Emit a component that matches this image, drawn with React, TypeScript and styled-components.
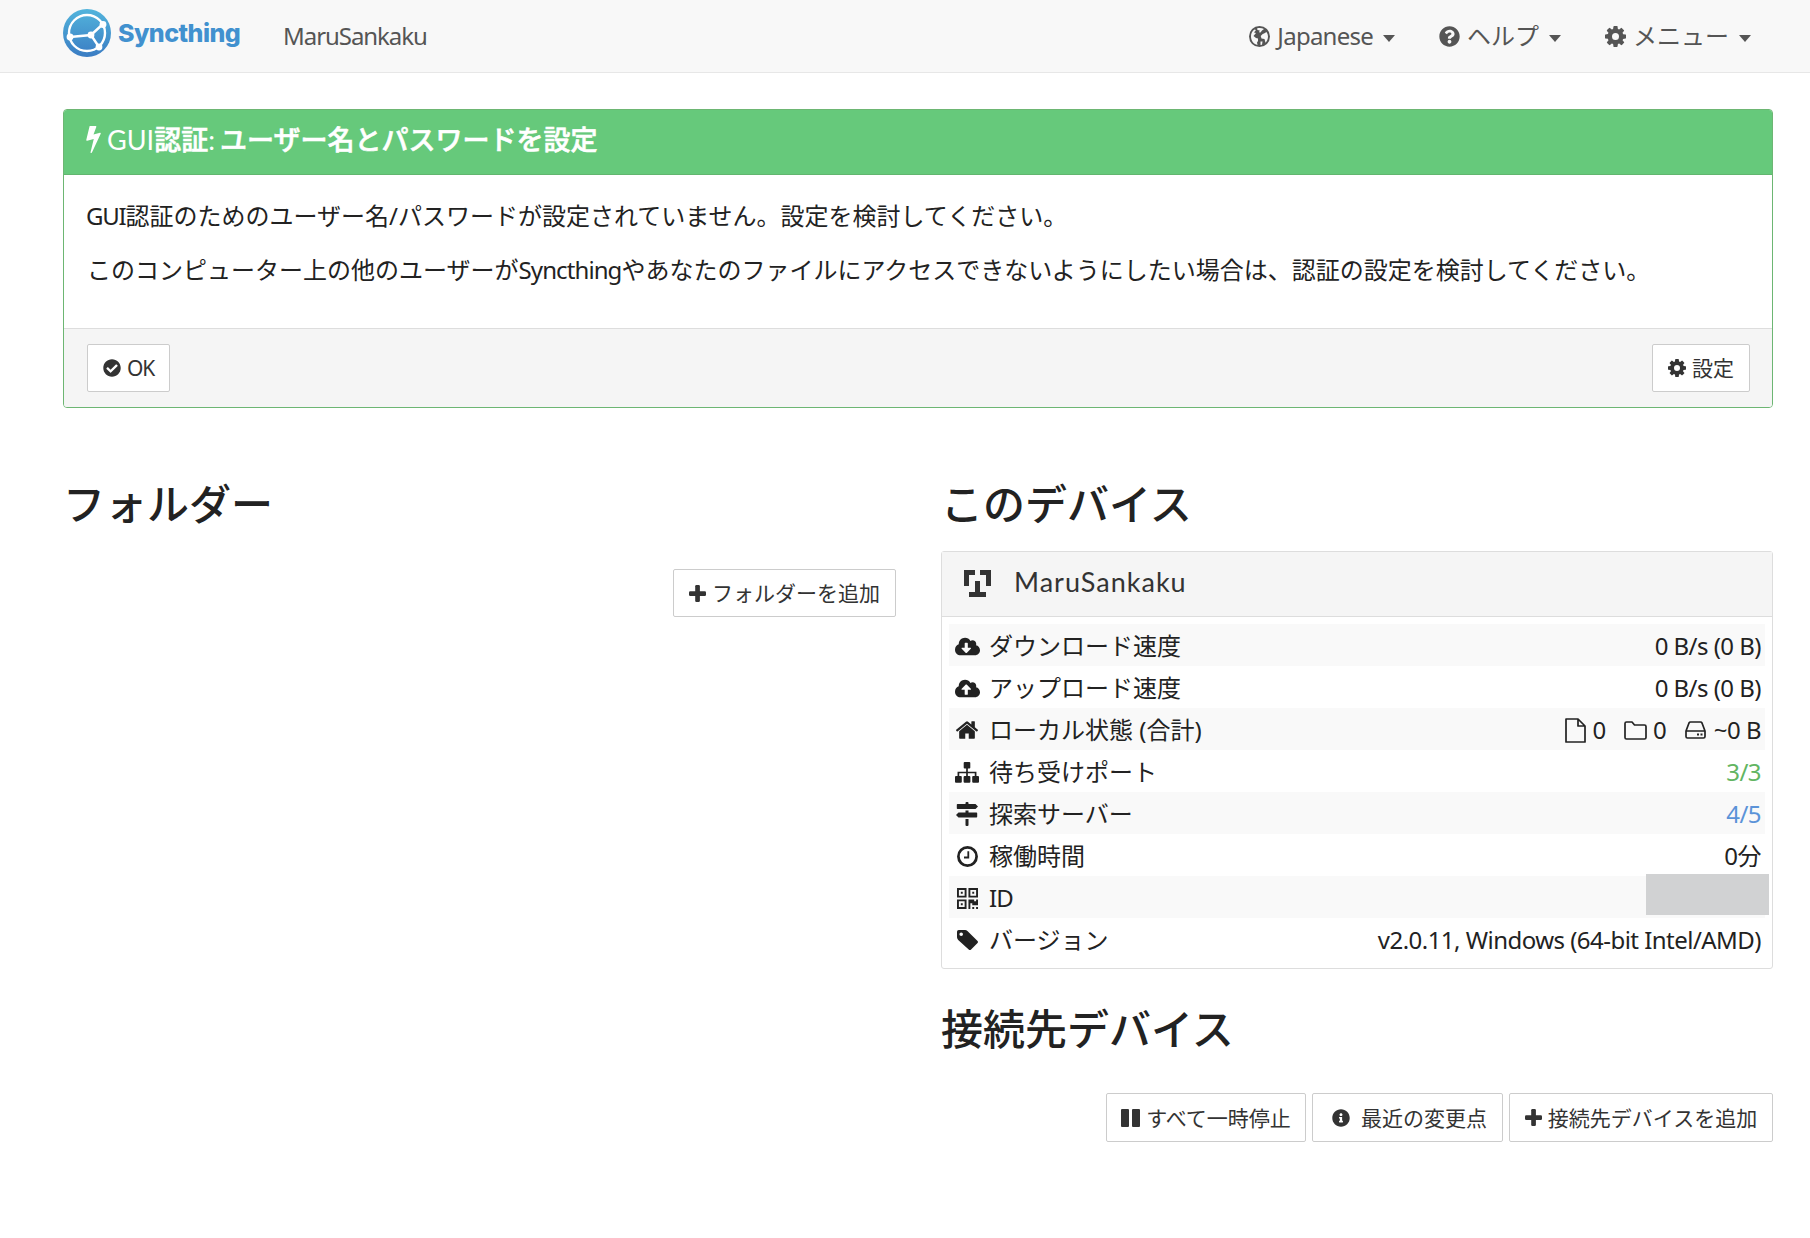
import React from 'react';
import styled, { createGlobalStyle } from 'styled-components';
import { FaQuestionCircle, FaCheckCircle, FaInfoCircle, FaCloudDownloadAlt, FaCloudUploadAlt } from 'react-icons/fa';

const jp = '"Noto Sans CJK JP"';

const GlobalStyle = createGlobalStyle`
  * { box-sizing: border-box; }
  body {
    margin: 0;
    background: #fff;
    color: #222;
    font-family: "Noto Sans", ${jp}, sans-serif;
    font-size: 24px;
    line-height: 34px;
  }
  h1, h2, p { margin: 0; }
  svg { flex: none; display: block; }
`;

const Navbar = styled.nav`
  height: 73px;
  background: #f8f8f8;
  border-bottom: 1px solid #e7e7e7;
  display: flex;
  align-items: center;
  padding: 0 59px 0 63px;
  color: #555;
`;

const Brand = styled.div`
  display: flex;
  align-items: center;
  gap: 7px;
  width: 220px;
  height: 48px;
  margin-bottom: 6px;
  color: #4191cf;
  font: 800 25px/36px "Inter", sans-serif;
`;

const Latin = styled.span<{ $ls?: number }>`
  letter-spacing: ${(p) => p.$ls ?? -0.9}px;
`;

const DeviceName = styled.div`
  flex: 1;
`;

const NavItem = styled.div<{ $gap: number }>`
  display: flex;
  align-items: center;
  margin-left: ${(p) => p.$gap}px;
  white-space: nowrap;
  svg { margin-right: 7px; }
`;

const Caret = styled.span`
  margin: 4px 0 0 10px;
  border: 6px solid transparent;
  border-top: 7px solid #555;
  border-bottom: 0;
`;

const Main = styled.main`
  padding: 36px 37px 0 63px;
`;

const Notice = styled.section`
  height: 299px;
  border: 1px solid #6db673;
  border-radius: 4px;
  overflow: hidden;
  display: flex;
  flex-direction: column;
`;

const NoticeHead = styled.div`
  height: 65px;
  background: #66c97b;
  border-bottom: 1px solid #62b56f;
  color: #fff;
  display: flex;
  align-items: center;
  gap: 6px;
  padding: 0 22px 5px;
  font: 400 27px/36px Lato, sans-serif;
`;

const Strong = styled.span`
  font-family: ${jp}, sans-serif;
  font-weight: 500;
  -webkit-text-stroke: 0.6px currentColor;
`;

const NoticeTitle = styled.h2`
  font: inherit;
  white-space: pre;
`;

const NoticeBody = styled.div`
  flex: 1;
  padding: 24px 23px;
  display: flex;
  flex-direction: column;
  gap: 20px;
  white-space: nowrap;
  p:first-child { margin-left: -1px; }
`;

const NoticeFoot = styled.div`
  height: 79px;
  background: #f5f5f5;
  border-top: 1px solid #ddd;
  display: flex;
  justify-content: space-between;
  align-items: center;
  padding: 0 22px 0 23px;
`;

const Button = styled.button<{ $w: number; $h?: number; $gap?: number; $indent?: number }>`
  width: ${(p) => p.$w}px;
  height: ${(p) => p.$h ?? 48}px;
  padding: 0 0 0 ${(p) => p.$indent ?? 0}px;
  border: 1px solid #ccc;
  border-radius: 2px;
  background: #fff;
  color: #333;
  display: flex;
  align-items: center;
  justify-content: center;
  gap: ${(p) => p.$gap ?? 6}px;
  white-space: nowrap;
  font: 400 21px/30px "Noto Sans", ${jp}, sans-serif;
`;

const Columns = styled.div`
  display: grid;
  grid-template-columns: 833px 832px;
  column-gap: 45px;
`;

const Column = styled.div`
  padding-top: 69px;
`;

const Heading = styled.h1`
  height: 50px;
  white-space: nowrap;
  font: 500 42px/50px ${jp}, sans-serif;
`;

const Actions = styled.div<{ $top: number }>`
  display: flex;
  justify-content: flex-end;
  gap: 6px;
  margin-top: ${(p) => p.$top}px;
`;

const Panel = styled.section`
  height: 418px;
  margin: 24px 0 33px;
  border: 1px solid #ddd;
  border-radius: 3px;
`;

const PanelHead = styled.div`
  height: 65px;
  background: #f5f5f5;
  border-bottom: 1px solid #ddd;
  display: flex;
  align-items: center;
  gap: 23px;
  padding: 0 22px 2px;
  color: #333;
  font: 400 27px/36px Lato, sans-serif;
`;

const PanelTitle = styled.h2`
  margin-bottom: 2px;
  font: inherit;
  letter-spacing: 1px;
`;

const Rows = styled.div`
  padding: 7px;
`;

const Row = styled.div`
  height: 42px;
  display: flex;
  align-items: center;
  padding: 2px 4px 0 3px;
  white-space: nowrap;
  &:nth-child(odd) { background: #f9f9f9; }
`;

const RowIcon = styled.span`
  width: 30px;
  margin-right: 7px;
  display: flex;
  justify-content: center;
`;

const Label = styled.span`
  flex: 1;
`;

const Value = styled.span<{ $color?: string }>`
  display: flex;
  align-items: center;
  letter-spacing: -0.53px;
  color: ${(p) => p.$color ?? '#222'};
`;

const Stat = styled.span<{ $gap?: number }>`
  display: flex;
  align-items: center;
  gap: ${(p) => p.$gap ?? 6}px;
  margin-left: 18.5px;
`;

const Redacted = styled.span`
  align-self: flex-start;
  width: 123px;
  height: 41px;
  margin: -4px -8px 0 0;
  background: #d1d2d3;
`;

const Logo = () => (
  <svg width="48" height="48" viewBox="0 0 48 48" fill="none">
    <defs>
      <linearGradient id="brand" x1="0" y1="0" x2="0" y2="1">
        <stop offset="0" stopColor="#52b4dc" />
        <stop offset="1" stopColor="#3a7cc3" />
      </linearGradient>
    </defs>
    <circle cx="24" cy="24" r="24" fill="url(#brand)" />
    <circle cx="24" cy="24" r="18" stroke="#fff" strokeWidth="2.4" />
    <path d="M40 15 28 26 7 28M28 26l8 12" stroke="#fff" strokeWidth="2.4" />
    <g fill="#fff">
      <circle cx="40" cy="15.500" r="3.400" />
      <circle cx="28" cy="26" r="3.400" />
      <circle cx="7" cy="28" r="3.400" />
      <circle cx="36" cy="38" r="3.400" />
    </g>
  </svg>
);

const Bolt = () => (
  <svg width="15" height="27" viewBox="448 128 896 1664" fill="currentColor">
    <path d="M1333 566q18 20 7 44l-540 1157q-13 25-42 25-4 0-14-2-17-5-25.500-19t-4.500-30l197-808-406 101q-4 1-12 1-18 0-31-11-18-15-13-39l201-825q4-16 18-26t32-10h328q19 0 32 12.500t13 29.500q0 8-5 18l-171 463 396-98q8-2 12-2 19 0 34 15z" />
  </svg>
);

const Cog = ({ size }: { size: number }) => (
  <svg width={size} height={size} viewBox="0 128 1536 1536" fill="currentColor" fillRule="evenodd">
    <path d="M1024 896a256 256 0 1 0-512 0 256 256 0 1 0 512 0z M1536 787v222q0 12-8 23t-20 13l-185 28q-19 54-39 91 35 50 107 138 10 12 10 25t-9 23q-27 37-99 108t-94 71q-12 0-26-9l-138-108q-44 23-91 38-16 136-29 186-7 28-36 28h-222q-14 0-24.500-8.500t-11.500-21.500l-28-184q-49-16-90-37l-141 107q-10 9-25 9-14 0-25-11-126-114-165-168-7-10-7-23 0-12 8-23 15-21 51-66.500t54-70.500q-27-50-41-99l-183-27q-13-2-21-12.500t-8-23.500v-222q0-12 8-23t19-13l186-28q14-46 39-92-40-57-107-138-10-12-10-24 0-10 9-23 26-36 98.500-107.500t94.500-71.500q13 0 26 10l138 107q44-23 91-38 16-136 29-186 7-28 36-28h222q14 0 24.500 8.500t11.500 21.500l28 184q49 16 90 37l142-107q9-9 24-9 13 0 25 10 129 119 165 170 7 8 7 22 0 12-8 23-15 21-51 66.500t-54 70.500q26 50 41 98l183 28q13 2 21 12.500t8 23.500z" />
  </svg>
);

const Globe = () => (
  <svg width="21" height="21" viewBox="0 0 21 21">
    <circle cx="10.500" cy="10.500" r="10.500" fill="currentColor" />
    <g fill="#f8f8f8">
      <path d="M2 10.500C2 7.500 3.200 5 5.500 3.500L7 4 5 6.500l2 .5-2.500 3 2.500 2 2 .5v2.500L8 16.500 8.500 19C5 18.200 2 15 2 10.500Z" />
      <path d="M8 2.400c2.500-.8 5-.4 7 .6L13 4.500l-1.500 2-1.500-.3.800-1.700L8.500 4Z" />
      <path d="M15 7.500 17.500 6C18.500 7.500 19 9 19 10.500c0 2.500-1 4.600-2.500 6.200L15.500 13l-3-.5-.8-2.500 2-2Z" />
      <path d="M11.500 15.500h2L13 18.700l-1.500.3Z" />
    </g>
  </svg>
);

const Plus = () => (
  <svg width="17" height="17" viewBox="0 0 17 17" fill="currentColor">
    <rect y="6.200" width="17" height="4.700" rx="1.200" />
    <rect x="6.200" width="4.700" height="17" rx="1.200" />
  </svg>
);

const Pause = () => (
  <svg width="19" height="18" viewBox="0 0 19 18" fill="currentColor">
    <rect width="8" height="18" rx="1" />
    <rect x="11" width="8" height="18" rx="1" />
  </svg>
);

const Home = () => (
  <svg width="22" height="18" viewBox="89 240 1614 1300" fill="currentColor">
    <path d="M1472 992v480q0 26-19 45t-45 19h-384v-384h-256v384h-384q-26 0-45-19t-19-45v-480q0-1 .5-3t.5-3l575-474 575 474q1 2 1 6zm223-69l-62 74q-8 9-21 11h-3q-13 0-21-7l-692-577-692 577q-12 8-24 7-13-2-21-11l-62-74q-8-10-7-23.500t11-21.500l719-599q32-26 76-26t76 26l244 204v-195q0-14 9-23t23-9h192q14 0 23 9t9 23v408l219 182q10 8 11 21.500t-7 23.500z" />
  </svg>
);

const Sitemap = () => (
  <svg width="24" height="21" viewBox="0 0 24 21" fill="currentColor">
    <rect x="8.700" width="6.600" height="6.600" rx="1" />
    <rect y="14" width="6.800" height="6.800" rx="1" />
    <rect x="8.600" y="14" width="6.800" height="6.800" rx="1" />
    <rect x="17.200" y="14" width="6.800" height="6.800" rx="1" />
    <path d="M3.400 15v-4.500h17.200V15M12 5v10" fill="none" stroke="currentColor" strokeWidth="1.700" />
  </svg>
);

const MapSigns = () => (
  <svg width="22" height="24" viewBox="0 0 22 24" fill="currentColor">
    <path d="M9.500 1q0-1 1-1h1q1 0 1 1v1h7L22 4.500 19.500 7H1.500Q.8 7 .8 6.200V2.800Q.8 2 1.500 2h8ZM9.500 8.500h3v2h8q.7 0 .7.800v3.400q0 .8-.7.800H2.500L0 13l2.500-2.500h7ZM9.500 17h3v6q0 1-1 1h-1q-1 0-1-1Z" />
  </svg>
);

const Qrcode = () => (
  <svg width="21" height="21" viewBox="0 0 11 11" fill="currentColor" fillRule="evenodd">
    <path d="M0 0h5v5H0ZM1 1v3h3V1ZM2 2h1v1H2ZM6 0h5v5H6ZM7 1v3h3V1ZM8 2h1v1H8ZM0 6h5v5H0ZM1 7v3h3V7ZM2 8h1v1H2ZM6 6h3v1h1V6h1v3H8V8H7v3H6ZM8 10h1v1H8ZM10 10h1v1h-1Z" />
  </svg>
);

const Tag = () => (
  <svg width="21" height="20" viewBox="0 0 21 20" fill="currentColor" fillRule="evenodd">
    <path d="M0 1.700Q0 0 1.700 0H8q1.400 0 2.700 1.200l9.600 9.600q1.300 1.200 0 2.500l-6.200 6.200q-1.200 1-2.400 0L1.200 9.900Q0 8.700 0 7.300ZM4.200 2.400a1.800 1.800 0 1 0 0 3.600 1.800 1.800 0 0 0 0-3.600Z" />
  </svg>
);

const Identicon = () => (
  <svg width="27" height="27" viewBox="0 0 5 5" fill="#333" shapeRendering="crispEdges">
    <path d="M0 0h2v1H1v2H0ZM3 0h2v3H4V1H3ZM2 2h1v2h1v1H1V4h1Z" />
  </svg>
);

const ClockIcon = () => (
  <svg width="21" height="21" viewBox="0 0 21 21" fill="none" stroke="currentColor">
    <circle cx="10.500" cy="10.500" r="9.100" strokeWidth="2.700" />
    <path d="M11.300 5.300v6.200H7" strokeWidth="1.800" />
  </svg>
);

const FileIcon = () => (
  <svg width="21" height="25" viewBox="0 0 21 25" fill="none" stroke="currentColor" strokeWidth="1.700" strokeLinejoin="round">
    <path d="M1 1h12l7 7v16H1ZM13 1v7h7" />
  </svg>
);

const FolderIcon = () => (
  <svg width="23" height="19" viewBox="0 0 23 19" fill="none" stroke="currentColor" strokeWidth="1.700" strokeLinejoin="round">
    <path d="M1 2.500Q1 1 2.500 1H8l2.500 3H20.500Q22 4 22 5.500v11q0 1.500-1.500 1.500h-18Q1 18 1 16.500Z" />
  </svg>
);

const DriveIcon = () => (
  <svg width="21" height="18" viewBox="0 0 21 18" fill="none" stroke="currentColor" strokeWidth="1.700" strokeLinejoin="round">
    <path d="M1 10 4 2Q4.500 1 5.500 1h10q1 0 1.500 1l3 8v5.500q0 1.500-1.500 1.500h-16Q1 17 1 15.500ZM1 10h19" />
    <path d="M12 13.500h2M15.500 13.500h2" strokeWidth="2" />
  </svg>
);

export default function App() {
  return (
    <>
      <GlobalStyle />
      <Navbar>
        <Brand><Logo /><Latin $ls={-0.55}>Syncthing</Latin></Brand>
        <DeviceName><Latin $ls={-1.05}>MaruSankaku</Latin></DeviceName>
        <NavItem $gap={0}><Globe /><Latin $ls={-0.75}>Japanese</Latin><Caret /></NavItem>
        <NavItem $gap={44}><FaQuestionCircle size={21} />ヘルプ<Caret /></NavItem>
        <NavItem $gap={44}><Cog size={21} />メニュー<Caret /></NavItem>
      </Navbar>
      <Main>
        <Notice>
          <NoticeHead>
            <Bolt />
            <NoticeTitle>GUI<Strong>認証</Strong><Latin>: </Latin><Strong>ユーザー名とパスワードを設定</Strong></NoticeTitle>
          </NoticeHead>
          <NoticeBody>
            <p><Latin $ls={-1.2}>GUI</Latin>認証のためのユーザー名/パスワードが設定されていません。設定を検討してください。</p>
            <p>このコンピューター上の他のユーザーが<Latin>Syncthing</Latin>やあなたのファイルにアクセスできないようにしたい場合は、認証の設定を検討してください。</p>
          </NoticeBody>
          <NoticeFoot>
            <Button $w={83}><FaCheckCircle size={18} /><Latin $ls={-1.2}>OK</Latin></Button>
            <Button $w={98}><Cog size={18} />設定</Button>
          </NoticeFoot>
        </Notice>
        <Columns>
          <Column>
            <Heading>フォルダー</Heading>
            <Actions $top={42}>
              <Button $w={223}><Plus />フォルダーを追加</Button>
            </Actions>
          </Column>
          <Column>
            <Heading>このデバイス</Heading>
            <Panel>
              <PanelHead><Identicon /><PanelTitle>MaruSankaku</PanelTitle></PanelHead>
              <Rows>
                <Row><RowIcon><FaCloudDownloadAlt size={25} /></RowIcon><Label>ダウンロード速度</Label><Value>0 B/s (0 B)</Value></Row>
                <Row><RowIcon><FaCloudUploadAlt size={25} /></RowIcon><Label>アップロード速度</Label><Value>0 B/s (0 B)</Value></Row>
                <Row>
                  <RowIcon><Home /></RowIcon>
                  <Label>ローカル状態 (合計)</Label>
                  <Value>
                    <Stat><FileIcon />0</Stat>
                    <Stat><FolderIcon />0</Stat>
                    <Stat $gap={8}><DriveIcon />~0 B</Stat>
                  </Value>
                </Row>
                <Row><RowIcon><Sitemap /></RowIcon><Label>待ち受けポート</Label><Value $color="#62b562">3/3</Value></Row>
                <Row><RowIcon><MapSigns /></RowIcon><Label>探索サーバー</Label><Value $color="#5b93d8">4/5</Value></Row>
                <Row><RowIcon><ClockIcon /></RowIcon><Label>稼働時間</Label><Value>0分</Value></Row>
                <Row><RowIcon><Qrcode /></RowIcon><Label><Latin>ID</Latin></Label><Redacted /></Row>
                <Row><RowIcon><Tag /></RowIcon><Label>バージョン</Label><Value>v2.0.11, Windows (64-bit Intel/AMD)</Value></Row>
              </Rows>
            </Panel>
            <Heading>接続先デバイス</Heading>
            <Actions $top={41}>
              <Button $w={200} $h={49}><Pause />すべて一時停止</Button>
              <Button $w={191} $h={49} $gap={11} $indent={4}><FaInfoCircle size={18} />最近の変更点</Button>
              <Button $w={264} $h={49}><Plus />接続先デバイスを追加</Button>
            </Actions>
          </Column>
        </Columns>
      </Main>
    </>
  );
}
